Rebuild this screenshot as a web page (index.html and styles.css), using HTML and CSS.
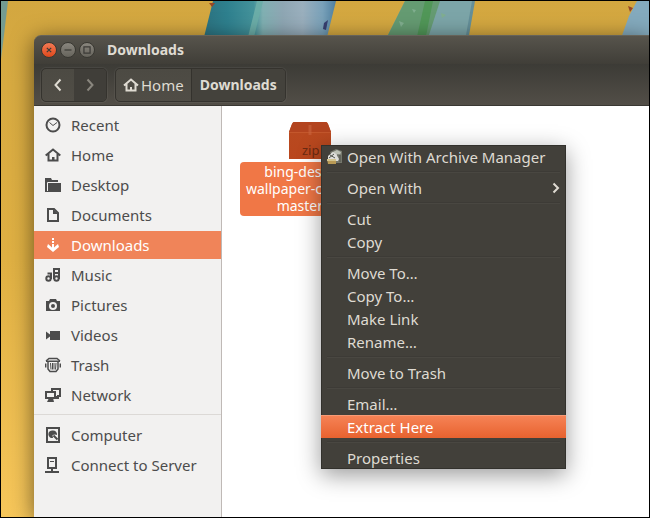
FILE: index.html
```html
<!DOCTYPE html>
<html lang="en">
<head>
<meta charset="utf-8">
<meta name="viewport" content="width=device-width, initial-scale=1">
<title>Downloads</title>
<link rel="stylesheet" href="styles.css">
</head>
<body>
<div class="desktop">
  <svg class="wallpaper" viewBox="0 0 648 516" preserveAspectRatio="none" aria-hidden="true">
    <defs>
      <linearGradient id="gold" x1="0" y1="0" x2="0" y2="1"><stop offset="0" stop-color="#d3a740"/><stop offset=".5" stop-color="#dfb043"/><stop offset="1" stop-color="#f6c65a"/></linearGradient>
      <linearGradient id="teal"><stop offset="0" stop-color="#2c7280"/><stop offset=".18" stop-color="#2e808e"/><stop offset=".38" stop-color="#44929a"/><stop offset=".45" stop-color="#80b0b2"/><stop offset=".6" stop-color="#8ea6b3"/><stop offset=".75" stop-color="#9aafbd"/><stop offset=".9" stop-color="#79a1b9"/><stop offset="1" stop-color="#4e7fa0"/></linearGradient>
    </defs>
    <rect width="648" height="516" fill="url(#gold)"/>
    <path d="M0 0H7L3 34 0 58Z" fill="#739b91"/>
    <path d="M212 0H335L325 40H202L209 12Z" fill="url(#teal)"/>
    <path d="M256 0h6l-10 40h-6Z" fill="#6bada8"/>
    <path d="M323 22l4-3-2 10-3-1Z" fill="#373f70"/>
    <path d="M404 0H472L465 40H384Z" fill="#7ca5a8"/>
    <path d="M404 0H439L426 40H384Z" fill="#659b72"/>
    <path d="M424 0h8l-8 40h-9Z" fill="#519758"/>
    <path d="M398 20l5 2-3 4zM411 8l4 1-2 3zM440 12l5 2-4 3z" fill="#80ae8f"/>
    <path d="M471 0h3l-7 40h-3Z" fill="#648f99"/>
    <path d="M636 0H648V40H619L628 15Z" fill="#84aabd"/>
    <path d="M627 5l5 2-3 4zM208 2h6l-3 4z" fill="#984524"/>
  </svg>

  <main class="window">
    <header class="titlebar">
      <button class="control close" aria-label="Close"><svg viewBox="0 0 16 16"><path d="M5.500 5.500l5 5M10.500 5.500l-5 5"/></svg></button>
      <button class="control" aria-label="Minimize"><svg viewBox="0 0 16 16"><path d="M4 8h8"/></svg></button>
      <button class="control" aria-label="Maximize"><svg viewBox="0 0 16 16"><path d="M4.500 4.500h7v7h-7z"/></svg></button>
      <h1>Downloads</h1>
    </header>
    <div class="toolbar">
      <div class="group">
        <button class="arrow" aria-label="Back"><svg viewBox="0 0 16 16"><path d="M10.500 2.500L5.500 8l5 5.500"/></svg></button>
        <button class="arrow forward" aria-label="Forward"><svg viewBox="0 0 16 16"><path d="M5.500 2.500l5 5.500-5 5.500"/></svg></button>
      </div>
      <nav class="group" aria-label="Path">
        <button class="crumb"><svg viewBox="0 0 16 16"><path d="M1 8.500L8 2.500l7 6M3.500 7v6.500h9V7" fill="none" stroke="currentColor" stroke-width="2"/><path d="M7 10h2v4H7z" fill="currentColor"/></svg>Home</button>
        <button class="crumb current">Downloads</button>
      </nav>
    </div>
    <div class="body">
      <nav class="sidebar" aria-label="Places">
        <a href="#recent"><svg viewBox="0 0 16 16"><circle cx="8" cy="8" r="6.500" class="line"/><path d="M4.500 5.500L8 8.500l4-3" class="thin"/></svg>Recent</a>
        <a href="#home"><svg viewBox="0 0 16 16"><path d="M.7 8.500L8 2.500l7.300 6M3.500 7v6.500h9V7" class="line"/><path d="M7 10h2.500v4H7z"/></svg>Home</a>
        <a href="#desktop"><svg viewBox="0 0 16 16"><path d="M0 1h6l1 2h6v2H3v10H0z"/><path d="M3 6h13v9H2z"/><path d="M2.500 14V5.500H7" fill="none" stroke="#f2f1f0"/></svg>Desktop</a>
        <a href="#documents"><svg viewBox="0 0 16 16"><path d="M3 2h6l4 4v8H3z" class="line"/><path d="M8 2v5h5z"/></svg>Documents</a>
        <a href="#downloads" class="selected" aria-current="page"><svg viewBox="0 0 16 16"><path d="M7 1h2v2H7zM7 4h2v2H7zM7 7h2v3.500l4-3.500 1 3-6 5-6-5 1-3 4 3.500z"/></svg>Downloads</a>
        <a href="#music"><svg viewBox="0 0 16 16"><path d="M6 12V6.500H2.500M14 12V2H9v10M9 6h5" class="line"/><circle cx="3.500" cy="11.500" r="2.200" class="line"/><circle cx="11.500" cy="11.500" r="2.200" class="line"/></svg>Music</a>
        <a href="#pictures"><svg viewBox="0 0 16 16"><path d="M1 4h3l1-2h6l1 2h3v10H1z"/><circle cx="8" cy="9" r="3" fill="none" stroke="#f2f1f0" stroke-width="2"/></svg>Pictures</a>
        <a href="#videos"><svg viewBox="0 0 16 16"><path d="M6 4h9v9H5V9.500l-4 3v-8l4 3V4z"/></svg>Videos</a>
        <a href="#trash"><svg viewBox="0 0 16 16"><path d="M1 4l3-2.500h8L15 4M3 5v7l2 2.500h6l2-2.500V5M.7 6.500v4M15.300 6.500v4" class="line narrow"/><path d="M5.500 6l.5 6.500M7.500 6v6.500M9 6v6.500M11 6l-.5 6.500" class="thin"/><path d="M1 3.500h14V5H1z"/></svg>Trash</a>
        <a href="#network"><svg viewBox="0 0 16 16"><path d="M7 4V2h8v7h-3M1 5h9v6H1z" class="line"/><path d="M4 11h4l1 4H2zM11 9h3v3h-3z"/></svg>Network</a>
        <hr>
        <a href="#computer"><svg viewBox="0 0 16 16"><path d="M2 1h12v14H2z" class="line"/><path d="M8 3.500a4 3.800 0 1 0 0 7.500L7.500 8 10 7.500l2 .5a4 4 0 0 0-4-4.500z"/><path d="M8.500 8.500l4 4" class="line"/></svg>Computer</a>
        <a href="#server"><svg viewBox="0 0 16 16"><path d="M3 1h8v10H3zM7 11v4M0 15h14" class="line"/><path d="M5 4h4v1H5z"/></svg>Connect to Server</a>
      </nav>
      <section class="files" aria-label="Files">
        <button class="file">
          <svg viewBox="0 0 42 37" aria-hidden="true">
            <defs><linearGradient id="box" x1="0" y1="0" x2="0" y2="1"><stop offset="0" stop-color="#b84a20"/><stop offset="1" stop-color="#b9461d"/></linearGradient></defs>
            <path d="M5 0h32q1 0 2 2l3 8v27H0V10l3-8q1-2 2-2z" fill="url(#box)"/><path d="M5 0h32q1 0 2 2l3 8H0l3-8q1-2 2-2z" fill="#b3441f"/><path d="M0 10.500h42" stroke="#c4572c"/><path d="M19.500 3h3v10h-3z" fill="#c96540" opacity=".6"/>
            <text x="13" y="33">zip</text>
          </svg>
          <span class="filename">bing-desktop-<br>wallpaper-changer-<br>master.zip</span>
        </button>
      </section>
    </div>
  </main>

  <div class="menu" role="menu">
    <button role="menuitem"><svg class="archive" viewBox="0 0 16 16" aria-hidden="true"><path d="M3 3l6-3 6 2v12H7z" fill="#75776c"/><path d="M4 4l6-3 4 2-1 3-9 2z" fill="#bdc1b5"/><path d="M1 7l5-4 3 2 3 5-1 2H1z" fill="#dededa"/><path d="M0 10h9v5H1z" fill="#b99a55"/><path d="M0 10h9v2H0z" fill="#d3c48d"/><path d="M3 6l5 3M10 6h3v7M2 9l5-4" fill="none" stroke="#52554d"/></svg>Open With Archive Manager</button>
    <hr>
    <button role="menuitem" aria-haspopup="true">Open With<svg class="submenu" viewBox="0 0 8 12" aria-hidden="true"><path d="M1.500 1.500L6 6l-4.500 4.500"/></svg></button>
    <hr>
    <button role="menuitem">Cut</button>
    <button role="menuitem">Copy</button>
    <hr>
    <button role="menuitem">Move To…</button>
    <button role="menuitem">Copy To…</button>
    <button role="menuitem">Make Link</button>
    <button role="menuitem">Rename…</button>
    <hr>
    <button role="menuitem">Move to Trash</button>
    <hr>
    <button role="menuitem">Email…</button>
    <button role="menuitem" class="active">Extract Here</button>
    <hr>
    <button role="menuitem">Properties</button>
  </div>
</div>
</body>
</html>
```
FILE: styles.css
```css
* {
  box-sizing: border-box;
}

body {
  margin: 0;
  font: 15px/20px "Noto Sans", "Open Sans", sans-serif;
  color: #4c4c4c;
}

button {
  margin: 0;
  padding: 0;
  border: 0;
  background: none;
  font: inherit;
  color: inherit;
}

.desktop {
  position: relative;
  display: flex;
  min-height: 100vh;
  padding: 34px 0 0 33px;
  border: 1px solid #000;
  overflow: hidden;
}

.wallpaper {
  position: absolute;
  inset: 0;
  width: 100%;
  height: 100%;
}

.window {
  position: relative;
  flex: 1;
  display: flex;
  flex-direction: column;
  border-radius: 7px 0 0 0;
  box-shadow: 0 4px 22px rgba(0, 0, 0, .55);
}

.titlebar {
  display: flex;
  align-items: center;
  gap: 3px;
  height: 29px;
  padding-left: 7px;
  border-top: 1px solid #66635a;
  border-radius: 7px 0 0 0;
  background: linear-gradient(#57544c, #403e38);
  color: #dfdbd2;
}

.titlebar h1 {
  margin: 0 0 0 9px;
  font-size: 14px;
  font-weight: 700;
}

.control {
  width: 16px;
  height: 16px;
  border: 1px solid #393832;
  border-radius: 50%;
  background: linear-gradient(#89867e, #66645c);
}

.control svg {
  display: block;
  width: 14px;
  height: 14px;
  fill: none;
  stroke: #3c3b37;
  stroke-width: 1.4;
}

.control.close {
  background: linear-gradient(#f37a54, #df491c);
}

.toolbar {
  display: flex;
  gap: 8px;
  height: 42px;
  padding: 4px 7px 3px;
  border-bottom: 1px solid #3a3833;
  background: linear-gradient(#3c3b36, #524e47);
  color: #dfdbd2;
}

.group {
  display: flex;
  border: 1px solid #35332e;
  border-radius: 5px;
  background: linear-gradient(#4c4a43, #504d46);
  box-shadow: 0 0 0 1px rgba(255, 255, 255, .05);
  overflow: hidden;
}

.arrow {
  width: 32px;
}

.arrow svg {
  display: block;
  width: 16px;
  height: 16px;
  margin: auto;
  fill: none;
  stroke: currentColor;
  stroke-width: 2;
}

.arrow.forward {
  background: #403e39;
  color: #89867e;
}

.crumb {
  display: flex;
  align-items: center;
  gap: 2px;
  padding: 0 7px;
}

.crumb svg {
  width: 16px;
  height: 16px;
}

.crumb.current {
  padding: 0 8px;
  border-left: 1px solid #34322d;
  background: #44423c;
  font-size: 14px;
  font-weight: 700;
}

.body {
  flex: 1;
  display: flex;
  background: #fff;
}

.sidebar {
  flex: 0 0 188px;
  padding: 4px 0;
  border-right: 1px solid #bfb9b6;
  background: #f2f1f0;
}

.sidebar a {
  display: flex;
  align-items: center;
  gap: 10px;
  height: 28px;
  margin: 1px 0 2px;
  padding-left: 11px;
  color: #4c4c4c;
  text-decoration: none;
}

.sidebar a.selected {
  background: #f08459;
  color: #fff;
}

.sidebar svg {
  width: 16px;
  height: 16px;
  fill: currentColor;
}

.sidebar .line {
  fill: none;
  stroke: currentColor;
  stroke-width: 2;
}

.sidebar .narrow {
  stroke-width: 1.5;
}

.sidebar .thin {
  fill: none;
  stroke: currentColor;
}

.sidebar hr {
  margin: 5px 0 6px;
  border: 0;
  border-top: 1px solid #dcd9d6;
}

.files {
  flex: 1;
  padding: 16px 18px;
}

.file {
  display: flex;
  flex-direction: column;
  align-items: center;
  gap: 3px;
}

.file svg {
  width: 42px;
  height: 37px;
}

.file text {
  fill: #6b2a12;
  font-size: 13px;
}

.filename {
  min-width: 140px;
  padding: 1px 4px 2px;
  border-radius: 4px;
  background: #f07746;
  color: #fff;
  font-size: 14px;
  line-height: 17px;
}

.menu {
  position: absolute;
  top: 144px;
  left: 320px;
  width: 245px;
  background: #42403a;
  color: #dfdbd2;
  box-shadow: 0 6px 22px rgba(0, 0, 0, .4), inset 0 0 0 1px #32312c;
}

.menu button {
  display: flex;
  align-items: center;
  width: 100%;
  height: 23px;
  padding: 0 6px 0 26px;
  white-space: nowrap;
}

.menu .active {
  background: linear-gradient(#f68457, #e8622f);
  color: #fff;
  box-shadow: inset 0 1px #f79b76;
}

.menu hr {
  height: 2px;
  margin: 3px 6px;
  border: 0;
  border-top: 1px solid #3d3b36;
  border-bottom: 1px solid #494741;
}

.archive {
  width: 16px;
  height: 16px;
  margin: 0 4px 0 -20px;
}

.submenu {
  width: 8px;
  height: 12px;
  margin-left: auto;
  fill: none;
  stroke: currentColor;
  stroke-width: 2;
}
```
